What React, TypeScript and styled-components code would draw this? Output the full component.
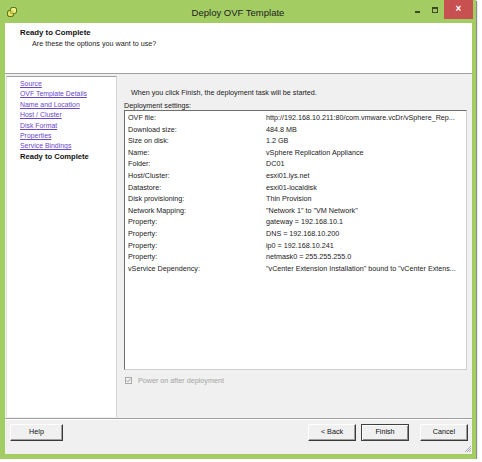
import styled, { createGlobalStyle } from "styled-components";

// "Deploy OVF Template" wizard, last step, in a Windows 8 green frame.

const Global = createGlobalStyle`
  html, body { margin: 0; padding: 0; background: #fff; }
  body { font-family: "Liberation Sans", Arial, sans-serif; color: #1a1a1a; }
`;

const Window = styled.div`
  width: 476px;
  height: 459px;
  background: #a3cc63;
  display: flex;
  flex-direction: column;
  box-shadow: 1px 1px 1px rgba(0, 0, 0, 0.45);
`;

const TitleBar = styled.div`
  height: 23px;
  display: grid;
  grid-template-columns: 1fr auto 1fr;
  align-items: start;
`;
const AppIcon = styled.svg`
  margin: 7px 0 0 7px;
  display: block;
`;
const Title = styled.div`
  font-size: 9.5px;
  line-height: 12px;
  padding-top: 7px;
  color: #222;
`;
const Controls = styled.div`
  justify-self: end;
  display: flex;
  align-items: flex-start;
  margin-right: 3px;
`;
const Minimize = styled.div`
  width: 5px;
  height: 2px;
  background: #3c4a2a;
  margin: 11px 12px 0 0;
`;
const Maximize = styled.div`
  width: 4px;
  height: 3px;
  border: 1px solid #3c4a2a;
  border-top-width: 2px;
  margin: 7px 6px 0 0;
`;
const Close = styled.div`
  width: 29px;
  height: 19px;
  background: #c75050;
  color: #fff;
  font-size: 10px;
  line-height: 18px;
  text-align: center;
  font-weight: bold;
`;

const Client = styled.div`
  flex: 1;
  margin: 0 4px 5px 5px;
  background: #f0f0f0;
  display: flex;
  flex-direction: column;
  min-height: 0;
`;

const Header = styled.div`
  height: 51px;
  box-sizing: border-box;
  background: #fff;
  border-bottom: 1px solid #a0a0a0;
  padding: 5px 15px 0;
`;
const HeaderTitle = styled.div`
  font-size: 7.8px;
  font-weight: bold;
  line-height: 10px;
  color: #111;
`;
const HeaderSub = styled.div`
  font-size: 7.2px;
  line-height: 10px;
  margin: 1px 0 0 12px;
  color: #222;
`;

const Body = styled.div`
  flex: 1;
  display: flex;
  padding-top: 2px;
  min-height: 0;
`;
const Nav = styled.div`
  width: 111px;
  box-sizing: border-box;
  margin: 0 0 1px 1px;
  background: #fff;
  border-top: 1px solid #a0a0a0;
  border-left: 1px solid #e2e2e2;
  border-right: 1px solid #d4d4d4;
  padding: 2px 0 0 13px;
`;
const NavItem = styled.div<{ $current?: boolean }>`
  font-size: ${({ $current }) => ($current ? "7.6px" : "6.9px")};
  line-height: 10.4px;
  white-space: nowrap;
  color: ${({ $current }) => ($current ? "#111" : "#6b46c9")};
  font-weight: ${({ $current }) => ($current ? "bold" : "normal")};
  text-decoration: ${({ $current }) => ($current ? "none" : "underline")};
`;

const Main = styled.div`
  flex: 1;
  padding: 12px 5px 0 7px;
  font-size: 7.2px;
`;
const Intro = styled.div`
  line-height: 9px;
  padding-left: 7px;
`;
const SettingsLabel = styled.div`
  line-height: 9px;
  margin-top: 4px;
`;
const SettingsBox = styled.div`
  height: 260px;
  box-sizing: border-box;
  background: #fff;
  border: 1px solid #d0d0d0;
  border-top-color: #6e6e6e;
  border-left-color: #6e6e6e;
  padding: 1px 3px;
`;
const Row = styled.div`
  display: grid;
  grid-template-columns: 138px 1fr;
  line-height: 11.6px;
  white-space: nowrap;
`;
const PowerOn = styled.div`
  display: flex;
  align-items: center;
  gap: 6px;
  margin-top: 6px;
  padding-left: 1px;
  line-height: 9px;
  color: #a3a3a3;
`;

const Footer = styled.div`
  position: relative;
  height: 36px;
  box-sizing: border-box;
  border-top: 1px solid #a0a0a0;
  box-shadow: inset 0 1px #fff;
  padding: 5px 4px 0 5px;
  display: flex;
  align-items: flex-start;
`;
const Spacer = styled.div`flex: 1;`;
const Button = styled.div<{ $default?: boolean; $w: number; $gap?: number }>`
  width: ${({ $w }) => $w}px;
  height: 17px;
  box-sizing: border-box;
  margin-left: ${({ $gap }) => $gap ?? 0}px;
  background: #f0f0f0;
  border: 1px solid;
  border-color: ${({ $default }) =>
    $default ? "#404040" : "#fff #3a3a3a #3a3a3a #fff"};
  box-shadow: ${({ $default }) =>
    $default
      ? "inset 1px 1px #fff, inset -1px -1px #8a8a8a"
      : "inset -1px -1px #a0a0a0"};
  font-size: 7.2px;
  line-height: 14px;
  text-align: center;
  color: #111;
`;
const Grip = styled.svg`
  position: absolute;
  right: 0;
  bottom: 1px;
`;

const nav = [
  "Source",
  "OVF Template Details",
  "Name and Location",
  "Host / Cluster",
  "Disk Format",
  "Properties",
  "Service Bindings",
];

const settings: [string, string][] = [
  ["OVF file:", "http://192.168.10.211:80/com.vmware.vcDr/vSphere_Rep..."],
  ["Download size:", "484.8 MB"],
  ["Size on disk:", "1.2 GB"],
  ["Name:", "vSphere Replication Appliance"],
  ["Folder:", "DC01"],
  ["Host/Cluster:", "esxi01.lys.net"],
  ["Datastore:", "esxi01-localdisk"],
  ["Disk provisioning:", "Thin Provision"],
  ["Network Mapping:", "\"Network 1\" to \"VM Network\""],
  ["Property:", "gateway = 192.168.10.1"],
  ["Property:", "DNS = 192.168.10.200"],
  ["Property:", "ip0 = 192.168.10.241"],
  ["Property:", "netmask0 = 255.255.255.0"],
  ["vService Dependency:", "\"vCenter Extension Installation\" bound to \"vCenter Extens..."],
];

export default function App() {
  return (
    <>
      <Global />
      <Window>
        <TitleBar>
          <AppIcon width="10" height="10" viewBox="0 0 10 10" aria-hidden="true">
            <rect x="0.5" y="3.5" width="6" height="6" rx="1.8" fill="#dfe36a" stroke="#566510" />
            <rect x="3.5" y="0.5" width="6" height="6" rx="1.8" fill="#eef08a" stroke="#566510" />
            <rect x="3.5" y="3.5" width="3" height="3" fill="#c9d04a" />
          </AppIcon>
          <Title>Deploy OVF Template</Title>
          <Controls>
            <Minimize />
            <Maximize />
            <Close>×</Close>
          </Controls>
        </TitleBar>
        <Client>
          <Header>
            <HeaderTitle>Ready to Complete</HeaderTitle>
            <HeaderSub>Are these the options you want to use?</HeaderSub>
          </Header>
          <Body>
            <Nav>
              {nav.map((n) => (
                <NavItem key={n}>{n}</NavItem>
              ))}
              <NavItem $current>Ready to Complete</NavItem>
            </Nav>
            <Main>
              <Intro>When you click Finish, the deployment task will be started.</Intro>
              <SettingsLabel>Deployment settings:</SettingsLabel>
              <SettingsBox>
                {settings.map(([k, v], i) => (
                  <Row key={i}>
                    <span>{k}</span>
                    <span>{v}</span>
                  </Row>
                ))}
              </SettingsBox>
              <PowerOn>
                <svg width="7" height="7" viewBox="0 0 7 7" aria-hidden="true">
                  <rect x="0.5" y="0.5" width="6" height="6" fill="#f4f4f4" stroke="#a8a8a8" />
                  <path d="M1.6 3.4 L2.9 4.8 L5.4 1.8" fill="none" stroke="#9a9a9a" strokeWidth="1" />
                </svg>
                Power on after deployment
              </PowerOn>
            </Main>
          </Body>
          <Footer>
            <Button $w={53}>Help</Button>
            <Spacer />
            <Button $w={48}>&lt; Back</Button>
            <Button $w={48} $gap={5} $default>Finish</Button>
            <Button $w={48} $gap={11}>Cancel</Button>
            <Grip width="9" height="9" viewBox="0 0 9 9" aria-hidden="true">
              <path d="M8 2 L2 8 M8 4 L4 8 M8 6 L6 8" stroke="#9a9a9a" strokeWidth="0.8" />
            </Grip>
          </Footer>
        </Client>
      </Window>
    </>
  );
}
